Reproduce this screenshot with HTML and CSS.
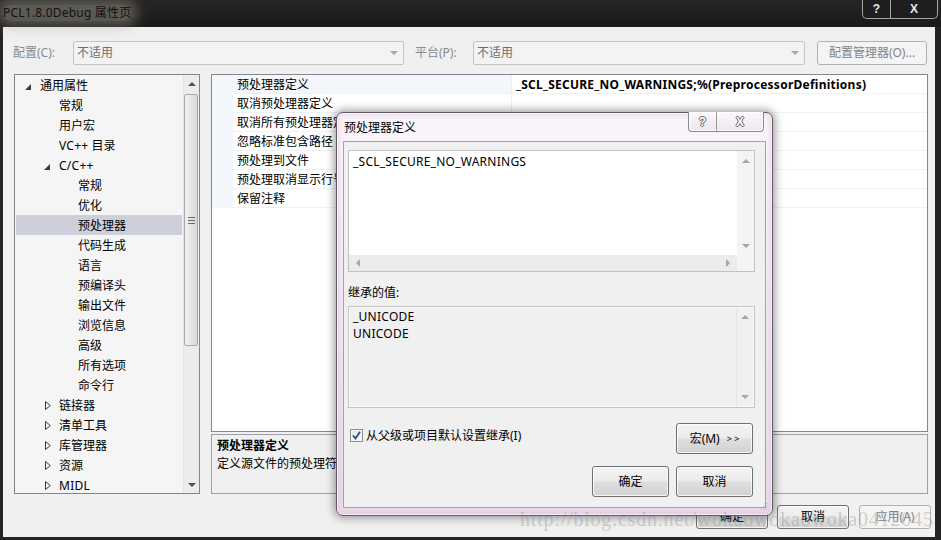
FILE: index.html
```html
<!DOCTYPE html>
<html lang="zh-CN">
<head>
<meta charset="utf-8">
<title>PCL1.8.0Debug 属性页</title>
<link rel="stylesheet" href="styles.css">
</head>
<body>
<div class="screen">
  <header class="titlebar">
    <span class="title">PCL1.8.0Debug 属性页</span>
    <div class="capbtns">
      <span class="cap cap-help">?</span>
      <span class="cap cap-close">X</span>
    </div>
  </header>

  <div class="window">
    <div class="toolbar">
      <span class="lbl lbl-config">配置(C):</span>
      <div class="combo combo-config"><span class="combo-text">不适用</span><span class="combo-arrow"></span></div>
      <span class="lbl lbl-platform">平台(P):</span>
      <div class="combo combo-platform"><span class="combo-text">不适用</span><span class="combo-arrow"></span></div>
      <span class="btn btn-disabled btn-cfg">配置管理器(O)...</span>
    </div>

    <div class="main">
      <div class="tree">
        <ul class="tree-list">
          <li class="node l0"><span class="twisty"><span class="exp"></span></span>通用属性</li>
          <li class="node l1"><span class="twisty"></span>常规</li>
          <li class="node l1"><span class="twisty"></span>用户宏</li>
          <li class="node l1"><span class="twisty"></span><span class="lat">VC++</span>&nbsp;目录</li>
          <li class="node l1"><span class="twisty"><span class="exp"></span></span><span class="lat">C/C++</span></li>
          <li class="node l2"><span class="twisty"></span>常规</li>
          <li class="node l2"><span class="twisty"></span>优化</li>
          <li class="node l2 selected"><span class="twisty"></span>预处理器</li>
          <li class="node l2"><span class="twisty"></span>代码生成</li>
          <li class="node l2"><span class="twisty"></span>语言</li>
          <li class="node l2"><span class="twisty"></span>预编译头</li>
          <li class="node l2"><span class="twisty"></span>输出文件</li>
          <li class="node l2"><span class="twisty"></span>浏览信息</li>
          <li class="node l2"><span class="twisty"></span>高级</li>
          <li class="node l2"><span class="twisty"></span>所有选项</li>
          <li class="node l2"><span class="twisty"></span>命令行</li>
          <li class="node l1"><span class="twisty"><svg class="col" width="6" height="9" viewBox="0 0 6 9"><path d="M0.5 0.5 L5.3 4.5 L0.5 8.5 Z" fill="none" stroke="#3a3a3a"/></svg></span>链接器</li>
          <li class="node l1"><span class="twisty"><svg class="col" width="6" height="9" viewBox="0 0 6 9"><path d="M0.5 0.5 L5.3 4.5 L0.5 8.5 Z" fill="none" stroke="#3a3a3a"/></svg></span>清单工具</li>
          <li class="node l1"><span class="twisty"><svg class="col" width="6" height="9" viewBox="0 0 6 9"><path d="M0.5 0.5 L5.3 4.5 L0.5 8.5 Z" fill="none" stroke="#3a3a3a"/></svg></span>库管理器</li>
          <li class="node l1"><span class="twisty"><svg class="col" width="6" height="9" viewBox="0 0 6 9"><path d="M0.5 0.5 L5.3 4.5 L0.5 8.5 Z" fill="none" stroke="#3a3a3a"/></svg></span>资源</li>
          <li class="node l1"><span class="twisty"><svg class="col" width="6" height="9" viewBox="0 0 6 9"><path d="M0.5 0.5 L5.3 4.5 L0.5 8.5 Z" fill="none" stroke="#3a3a3a"/></svg></span><span class="lat">MIDL</span></li>
        </ul>
        <div class="vscroll">
          <div class="sb-btn"><span class="tri-up"></span></div>
          <div class="sb-thumb"><span class="grip"></span></div>
          <div class="sb-track"></div>
          <div class="sb-btn"><span class="tri-down"></span></div>
        </div>
      </div>

      <div class="rightcol">
        <div class="grid">
          <div class="grow first"><span class="gutter"></span><span class="gname">预处理器定义</span><span class="gval bold lat">_SCL_SECURE_NO_WARNINGS;%(PreprocessorDefinitions)</span></div>
          <div class="grow"><span class="gutter"></span><span class="gname">取消预处理器定义</span><span class="gval"></span></div>
          <div class="grow"><span class="gutter"></span><span class="gname">取消所有预处理器定义</span><span class="gval"></span></div>
          <div class="grow"><span class="gutter"></span><span class="gname">忽略标准包含路径</span><span class="gval"></span></div>
          <div class="grow"><span class="gutter"></span><span class="gname">预处理到文件</span><span class="gval"></span></div>
          <div class="grow"><span class="gutter"></span><span class="gname">预处理取消显示行号</span><span class="gval"></span></div>
          <div class="grow"><span class="gutter"></span><span class="gname">保留注释</span><span class="gval"></span></div>
        </div>
        <div class="desc">
          <div class="desc-title">预处理器定义</div>
          <div class="desc-text">定义源文件的预处理符号。</div>
        </div>
      </div>
    </div>

    <div class="footer">
      <span class="btn fbtn">确定</span>
      <span class="btn fbtn ml9">取消</span>
      <span class="btn btn-disabled fbtn ml10">应用(A)</span>
    </div>
  </div>

  <div class="dialog">
    <div class="dlg-title">
      <span class="dlg-caption">预处理器定义</span>
      <div class="dlg-capbtns"><span class="dcap dcap-help">?</span><span class="dcap dcap-close">X</span></div>
    </div>
    <div class="dlg-client">
      <div class="editbox">
        <div class="edit-main">
          <div class="edit-text lat">_SCL_SECURE_NO_WARNINGS</div>
          <div class="edit-vs"><span class="tri-up light"></span><span class="tri-down light"></span></div>
        </div>
        <div class="edit-hs">
          <div class="hs-bar"><span class="tri-left light"></span><span class="tri-right light"></span></div>
          <span class="hs-corner"></span>
        </div>
      </div>
      <div class="inh-label">继承的值:</div>
      <div class="inhbox">
        <div class="inh-text lat"><div>_UNICODE</div><div>UNICODE</div></div>
        <div class="inh-vs"><span class="tri-up light"></span><span class="tri-down light"></span></div>
      </div>
      <div class="chkrow">
        <span class="chk"><svg width="9" height="9" viewBox="0 0 9 9"><path d="M1 4.5 L3.5 7.5 L8 0.8" fill="none" stroke="#2b4a8c" stroke-width="1.8"/></svg></span>
        <span class="chk-label">从父级或项目默认设置继承(I)</span>
        <span class="btn dbtn macro">宏(M)<span class="gt">&gt; &gt;</span></span>
      </div>
      <div class="okrow">
        <span class="btn dbtn">确定</span>
        <span class="btn dbtn">取消</span>
      </div>
    </div>
    <svg class="grip-corner" width="10" height="10" viewBox="0 0 10 10"><path d="M9 2 L2 9 M9 5 L5 9 M9 8 L8 9" stroke="#9a9a9a" stroke-width="1" stroke-dasharray="1 1"/></svg>
  </div>

  <div class="watermark">http://blog.csdn.net/wokaowokaowoka0412045</div>
</div>
</body>
</html>
```

FILE: styles.css
```css
* { box-sizing: border-box; }
html, body { margin: 0; padding: 0; }
body {
  width: 941px;
  height: 540px;
  overflow: hidden;
  background: #262626;
  font-family: "Noto Sans", "Noto Sans CJK SC", sans-serif;
  font-size: 12px;
  color: #000;
}
.screen {
  position: relative;
  width: 941px;
  height: 540px;
  background: #232323;
}
.lat { letter-spacing: 0.25px; }

/* ---- title bar ---- */
.titlebar {
  height: 27px;
  display: flex;
  align-items: flex-start;
  background: linear-gradient(#262626, #1a1a1a);
}
.title {
  margin: 5px 0 0 3px;
  line-height: 16px;
  color: #111;
  letter-spacing: 0.2px;
  background: rgba(165, 160, 145, 0.45);
  box-shadow: 0 0 12px 7px rgba(165, 160, 145, 0.4);
  border-radius: 10px;
}
.capbtns {
  margin: 0 3px 0 auto;
  display: flex;
  height: 19px;
  border: 1px solid #a4a4a4;
  border-top: none;
  border-radius: 0 0 5px 5px;
  background: #1e1e1e;
}
.cap {
  display: flex;
  align-items: center;
  justify-content: center;
  color: #e8e8e8;
  font-weight: bold;
  font-size: 12px;
  font-family: "Liberation Sans", sans-serif;
}
.cap-help { width: 28px; border-right: 1px solid #a4a4a4; }
.cap-close { width: 46px; }

/* ---- window ---- */
.window {
  margin-left: 3px;
  width: 932px;
  height: 510px;
  background: #f0f0f0;
  display: flex;
  flex-direction: column;
}
.toolbar {
  display: flex;
  align-items: center;
  height: 24px;
  margin-top: 14px;
  padding-left: 10px;
}
.lbl { color: #8a8a8a; line-height: 16px; }
.lbl-config { width: 60px; }
.lbl-platform { width: 58px; margin-left: 11px; }
.combo {
  height: 24px;
  border: 1px solid #c5c5c5;
  border-radius: 2px;
  background: #f3f3f3;
  display: flex;
  align-items: center;
  padding-left: 3px;
}
.combo-config { width: 331px; }
.combo-platform { width: 332px; }
.combo-text { color: #6d6d6d; flex: 1; line-height: 16px; }
.combo-arrow {
  width: 0; height: 0;
  margin-right: 5px;
  border-left: 4px solid transparent;
  border-right: 4px solid transparent;
  border-top: 4px solid #a8a8a8;
}

.btn {
  display: flex;
  align-items: center;
  justify-content: center;
  height: 24px;
  border: 1px solid #707070;
  border-radius: 3px;
  background: linear-gradient(#f4f4f4 0%, #ececec 48%, #dedede 52%, #d2d2d2 100%);
  box-shadow: inset 0 0 0 1px rgba(255, 255, 255, 0.75);
  color: #000;
  line-height: 16px;
}
.btn-disabled {
  border-color: #adb2b5;
  background: #f4f4f4;
  box-shadow: none;
  color: #838383;
}
.btn-cfg { width: 110px; margin-left: 12px; }

/* ---- main area ---- */
.main {
  display: flex;
  margin-top: 9px;
  padding-left: 11px;
  height: 420px;
}
.tree {
  width: 186px;
  height: 420px;
  border: 1px solid #828790;
  background: #f5f5f5;
  display: flex;
  overflow: hidden;
}
.tree-list {
  list-style: none;
  margin: 0;
  padding: 0;
  width: 168px;
  overflow: hidden;
}
.node {
  display: flex;
  align-items: center;
  height: 20px;
  line-height: 20px;
  padding-top: 1px;
  white-space: nowrap;
  color: #000;
}
.l0 { padding-left: 10px; }
.l1 { padding-left: 29px; }
.l2 { padding-left: 48px; }
.selected { background: #cdcfdb; margin: 0 1px; padding-left: 47px; }
.twisty {
  width: 15px;
  height: 19px;
  display: flex;
  align-items: center;
}
.exp {
  width: 0; height: 0;
  margin-top: 3px;
  border-left: 6px solid transparent;
  border-bottom: 6px solid #3c3c3c;
}
.col { margin-left: 1px; }

.vscroll {
  width: 16px;
  display: flex;
  flex-direction: column;
  background: #ececec;
  border-left: 1px solid #e2e2e2;
}
.sb-btn {
  height: 17px;
  display: flex;
  align-items: center;
  justify-content: center;
}
.sb-thumb {
  height: 252px;
  margin: 2px 1px 0 0;
  border: 1px solid #a8a8a8;
  border-radius: 2px;
  background: linear-gradient(90deg, #f0f0f0, #e2e2e2 60%, #d6d6d6);
  display: flex;
  align-items: center;
  justify-content: center;
}
.grip {
  width: 7px;
  height: 7px;
  background: repeating-linear-gradient(#6a6a6a 0 1px, transparent 1px 3px);
}
.sb-track { flex: 1; }
.tri-up {
  width: 0; height: 0;
  border-left: 4px solid transparent;
  border-right: 4px solid transparent;
  border-bottom: 4px solid #505050;
}
.tri-down {
  width: 0; height: 0;
  border-left: 4px solid transparent;
  border-right: 4px solid transparent;
  border-top: 4px solid #505050;
}
.tri-left {
  width: 0; height: 0;
  border-top: 4px solid transparent;
  border-bottom: 4px solid transparent;
  border-right: 4px solid #a6a6a6;
}
.tri-right {
  width: 0; height: 0;
  border-top: 4px solid transparent;
  border-bottom: 4px solid transparent;
  border-left: 4px solid #a6a6a6;
}
.tri-up.light { border-bottom-color: #a6a6a6; }
.tri-down.light { border-top-color: #a6a6a6; }

.rightcol {
  margin-left: 11px;
  width: 717px;
  display: flex;
  flex-direction: column;
}
.grid {
  height: 358px;
  border: 1px solid #828790;
  background: #fff;
}
.grow {
  display: flex;
  height: 19px;
  line-height: 20px;
  white-space: nowrap;
  overflow: hidden;
}
.gutter { width: 21px; background: #f3f6fb; }
.gname {
  width: 278px;
  padding-left: 4px;
  border-bottom: 1px solid #eff1f5;
  overflow: hidden;
}
.gval {
  flex: 1;
  padding-left: 4px;
  border-left: 1px solid #eceef3;
  border-bottom: 1px solid #eff1f5;
}
.first .gname { background: #f3f6fb; }
.bold { font-weight: bold; }

.desc {
  margin-top: 2px;
  height: 60px;
  border: 1px solid #9da0a6;
  background: #f0f0f0;
  padding: 2px 0 0 5px;
  line-height: 18px;
}
.desc-title { font-weight: bold; }

.footer {
  display: flex;
  justify-content: flex-end;
  margin-top: 11px;
  padding-right: 4px;
}
.fbtn { width: 72px; }
.ml9 { margin-left: 9px; }
.ml10 { margin-left: 10px; }

/* ---- dialog ---- */
.dialog {
  position: absolute;
  left: 336px;
  top: 112px;
  width: 437px;
  height: 404px;
  border: 1px solid #5c5c5c;
  border-radius: 7px;
  background: linear-gradient(#faf5fa, #f1e5f1 60%, #ead9ea);
  box-shadow: 0 0 9px 2px rgba(0, 0, 0, 0.38), inset 0 0 0 1px rgba(255, 255, 255, 0.7), inset 0 0 4px 2px rgba(220, 190, 220, 0.6);
  padding: 0 6px 7px 6px;
  display: flex;
  flex-direction: column;
}
.dlg-title {
  height: 28px;
  display: flex;
  align-items: flex-start;
}
.dlg-caption {
  margin: 7px 0 0 1px;
  line-height: 16px;
  color: #000;
}
.dlg-capbtns {
  margin: -1px 2px 0 auto;
  display: flex;
  height: 20px;
  border: 1px solid #8a8a8a;
  border-top: none;
  border-radius: 0 0 4px 4px;
  background: linear-gradient(#fbf8fb, #efe6ef);
  box-shadow: inset 0 0 0 1px rgba(255, 255, 255, 0.8);
}
.dcap {
  display: flex;
  align-items: center;
  justify-content: center;
  font-family: "Liberation Sans", sans-serif;
  font-weight: bold;
  font-size: 12px;
  color: #fafafa;
  text-shadow: 1px 0 #6a6a6a, -1px 0 #6a6a6a, 0 1px #6a6a6a, 0 -1px #6a6a6a;
}
.dcap-help { width: 28px; border-right: 1px solid #9a9a9a; }
.dcap-close { width: 46px; }

.dlg-client {
  flex: 1;
  background: #f0f0f0;
  border: 1px solid #a3a3a3;
  display: flex;
  flex-direction: column;
}
.editbox {
  margin: 8px 0 0 4px;
  width: 407px;
  height: 122px;
  border: 1px solid #c2c2c2;
  background: #fff;
  display: flex;
  flex-direction: column;
}
.edit-main {
  height: 104px;
  display: flex;
}
.edit-text {
  flex: 1;
  padding: 2px 0 0 4px;
  line-height: 18px;
}
.edit-vs {
  width: 17px;
  background: #f4f4f4;
  display: flex;
  flex-direction: column;
  align-items: center;
  justify-content: space-between;
  padding: 8px 0 7px;
}
.edit-hs {
  height: 16px;
  display: flex;
}
.hs-bar {
  flex: 1;
  background: #ececec;
  display: flex;
  align-items: center;
  justify-content: space-between;
  padding: 0 7px 0 7px;
}
.hs-corner { width: 17px; background: #f4f4f4; }

.inh-label {
  margin: 12px 0 0 4px;
  line-height: 17px;
}
.inhbox {
  margin: 5px 0 0 4px;
  width: 407px;
  height: 102px;
  border: 1px solid #c4c4c4;
  box-shadow: inset 0 0 0 1px #fafafa;
  background: #f0f0f0;
  display: flex;
}
.inh-text {
  flex: 1;
  padding: 1px 0 0 4px;
  line-height: 17px;
}
.inh-vs {
  width: 17px;
  border-left: 1px solid #e6e6e6;
  margin: 1px 1px 1px 0;
  display: flex;
  flex-direction: column;
  align-items: center;
  justify-content: space-between;
  padding: 7px 0 7px;
}

.chkrow {
  display: flex;
  align-items: flex-start;
  margin-top: 15px;
  height: 31px;
}
.chk {
  margin: 6px 0 0 6px;
  width: 13px;
  height: 13px;
  border: 1px solid #8e8f8f;
  background: linear-gradient(135deg, #e4e4e4, #fafafa);
  box-shadow: inset 0 0 0 1px #f4f4f4;
  display: flex;
  align-items: center;
  justify-content: center;
}
.chk-label {
  margin: 4px 0 0 3px;
  line-height: 17px;
}
.dbtn {
  width: 77px;
  height: 31px;
}
.macro { margin: 0 12px 0 auto; }
.gt {
  font-size: 9px;
  margin-left: 7px;
  letter-spacing: 0;
}
.okrow {
  display: flex;
  justify-content: flex-end;
  gap: 7px;
  margin: 12px 12px 0 0;
}
.grip-corner {
  position: absolute;
  right: 4px;
  bottom: 4px;
}

/* ---- watermark ---- */
.watermark {
  position: absolute;
  left: 520px;
  top: 507px;
  font-family: "Liberation Serif", serif;
  font-size: 20px;
  line-height: 24px;
  letter-spacing: 0.8px;
  color: rgba(150, 150, 150, 0.42);
  white-space: nowrap;
  pointer-events: none;
}
```
